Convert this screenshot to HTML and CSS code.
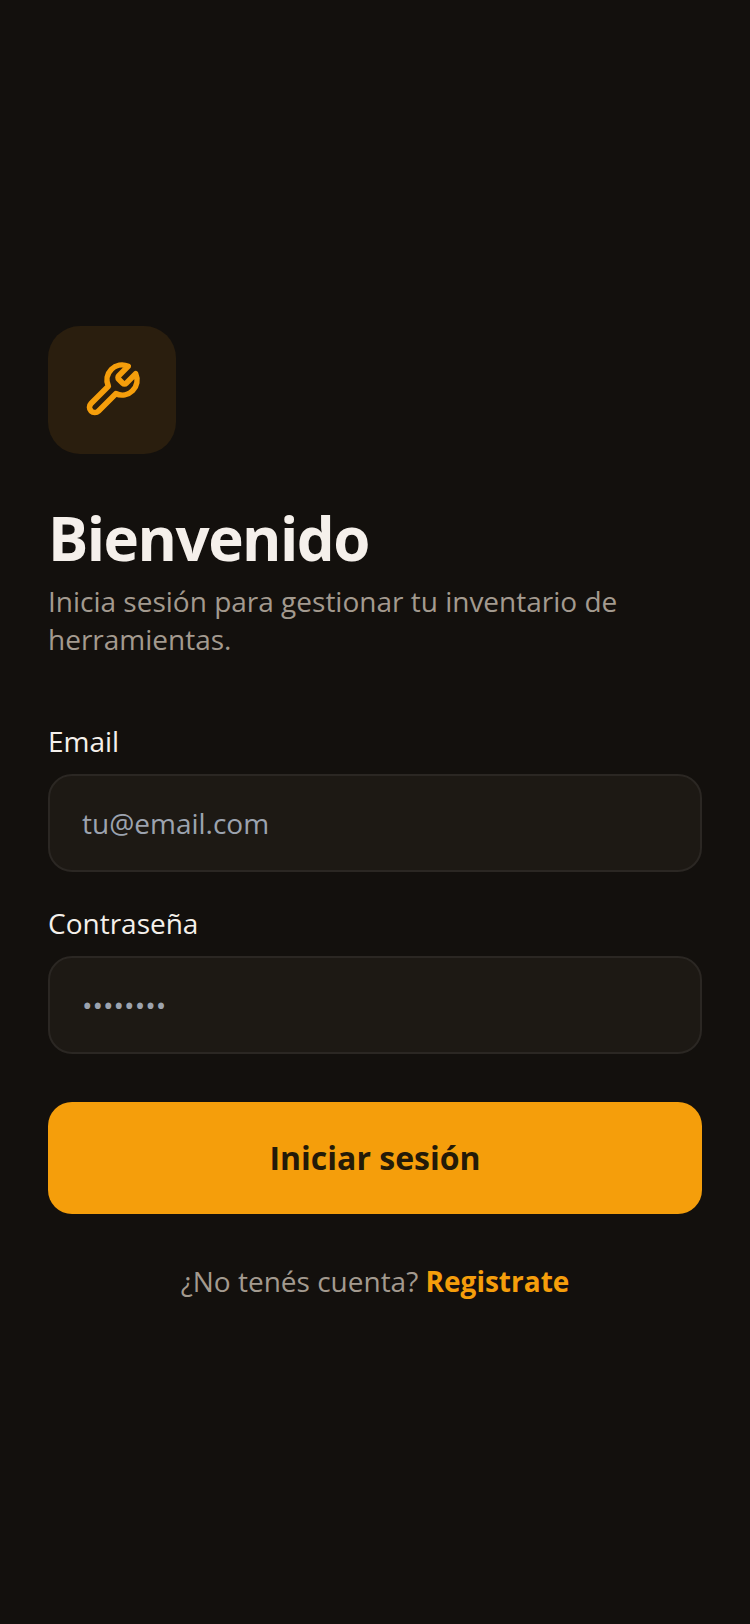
FILE: index.html
```html
<!DOCTYPE html>
<html lang="es">
<head>
<meta charset="utf-8">
<meta name="viewport" content="width=device-width, initial-scale=1">
<title>Iniciar sesión</title>
<link rel="stylesheet" href="styles.css">
</head>
<body>
<main class="login">
  <div class="logo">
    <svg class="logo-icon" viewBox="0 0 24 24" fill="none" stroke="currentColor" stroke-width="2.25" stroke-linecap="round" stroke-linejoin="round" aria-hidden="true"><path d="M14.7 6.3a1 1 0 0 0 0 1.4l1.6 1.6a1 1 0 0 0 1.4 0l3.77-3.77a6 6 0 0 1-7.94 7.94l-6.91 6.91a2.12 2.12 0 0 1-3-3l6.91-6.91a6 6 0 0 1 7.94-7.94l-3.76 3.76z"/></svg>
  </div>
  <header class="intro">
    <h1 class="title">Bienvenido</h1>
    <p class="subtitle">Inicia sesión para gestionar tu inventario de herramientas.</p>
  </header>
  <form class="form">
    <div class="field">
      <label class="label" for="email">Email</label>
      <input class="input" id="email" type="email" placeholder="tu@email.com">
    </div>
    <div class="field">
      <label class="label" for="password">Contraseña</label>
      <input class="input" id="password" type="password" placeholder="••••••••">
    </div>
    <button class="submit" type="submit">Iniciar sesión</button>
  </form>
  <p class="signup">¿No tenés cuenta? <a class="signup-link" href="#registro">Registrate</a></p>
</main>
</body>
</html>
```
FILE: styles.css
```css
* {
  box-sizing: border-box;
}

body {
  margin: 0;
  background: #13100d;
  color: #f5f0eb;
  font-family: "Open Sans", "Noto Sans", sans-serif;
  font-size: 28px;
  line-height: 38px;
}

.login {
  display: flex;
  flex-direction: column;
  justify-content: center;
  min-height: 100vh;
  padding: 48px 48px 46px;
}

.logo {
  display: flex;
  align-items: center;
  justify-content: center;
  width: 128px;
  height: 128px;
  margin-bottom: 48px;
  border-radius: 32px;
  background: #2a1e0e;
  color: #f59e0b;
}

.logo-icon {
  width: 60px;
  height: 60px;
}

.intro {
  margin-bottom: 64px;
}

.title {
  margin: 0 0 8px;
  font-size: 60px;
  font-weight: 700;
  line-height: 72px;
  letter-spacing: -0.025em;
}

.subtitle {
  margin: 0;
  color: #a39a8f;
}

.form {
  display: flex;
  flex-direction: column;
  gap: 32px;
}

.field {
  display: flex;
  flex-direction: column;
  gap: 14px;
}

.input {
  width: 100%;
  height: 98px;
  padding: 0 32px;
  border: 2px solid #2b2723;
  border-radius: 24px;
  background: #1d1914;
  color: inherit;
  font: inherit;
}

.input::placeholder {
  color: #9ca3af;
  opacity: 1;
}

.submit {
  height: 112px;
  margin-top: 16px;
  border: 0;
  border-radius: 24px;
  background: #f59e0b;
  color: #241a08;
  font: inherit;
  font-size: 32px;
  font-weight: 700;
  cursor: pointer;
}

.signup {
  margin: 48px 0 0;
  color: #a39a8f;
  text-align: center;
}

.signup-link {
  color: #f59e0b;
  font-weight: 700;
  text-decoration: none;
}
```
